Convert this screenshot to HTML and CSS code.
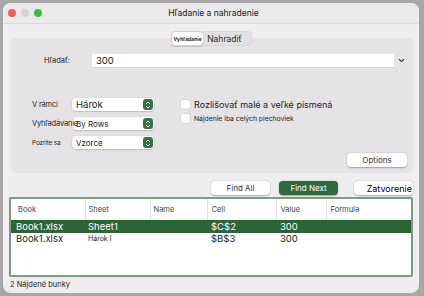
FILE: index.html
```html
<!DOCTYPE html>
<html lang="sk">
<head>
<meta charset="UTF-8">
<meta name="viewport" content="width=device-width, initial-scale=1.0">
<title>Hľadanie a nahradenie</title>
<link rel="stylesheet" href="styles.css">
</head>
<body>

<div class="window">
    <div class="titlebar">
        <div class="lights">
            <span class="light red"></span>
            <span class="light gray"></span>
            <span class="light green"></span>
        </div>
        <div class="title">Hľadanie a nahradenie</div>
    </div>

    <div class="content">
        <div class="tabs">
            <span class="tab active">Vyhľadanie</span>
            <span class="tab">Nahradiť</span>
        </div>

        <div class="group">
            <div class="find-row">
                <label class="find-label">Hľadať:</label>
                <div class="field">300</div>
                <span class="chevron">
                    <svg width="7" height="5" viewBox="0 0 7 5"><path d="M1 1.2 L3.5 3.6 L6 1.2" fill="none" stroke="#333" stroke-width="1.1"/></svg>
                </span>
            </div>

            <div class="options-area">
                <div class="popups">
                    <div class="popup-row">
                        <span class="plabel">V rámci</span>
                        <div class="popup big">Hárok<span class="stepper"><svg width="6" height="8" viewBox="0 0 6 8"><path d="M1 3 L3 1 L5 3 M1 5 L3 7 L5 5" fill="none" stroke="#fff" stroke-width="1"/></svg></span></div>
                    </div>
                    <div class="popup-row">
                        <span class="plabel">Vyhľadávanie</span>
                        <div class="popup">By Rows<span class="stepper"><svg width="6" height="8" viewBox="0 0 6 8"><path d="M1 3 L3 1 L5 3 M1 5 L3 7 L5 5" fill="none" stroke="#fff" stroke-width="1"/></svg></span></div>
                    </div>
                    <div class="popup-row">
                        <span class="plabel small">Pozrite sa</span>
                        <div class="popup">Vzorce<span class="stepper"><svg width="6" height="8" viewBox="0 0 6 8"><path d="M1 3 L3 1 L5 3 M1 5 L3 7 L5 5" fill="none" stroke="#fff" stroke-width="1"/></svg></span></div>
                    </div>
                </div>
                <div class="checks">
                    <div class="check-row"><span class="box"></span><span class="big-text">Rozlišovať malé a veľké písmená</span></div>
                    <div class="check-row"><span class="box"></span><span class="small-text">Nájdenie iba celých plechoviek</span></div>
                </div>
            </div>

            <div class="options-row">
                <button class="btn">Options</button>
            </div>
        </div>

        <div class="buttons">
            <button class="btn wide">Find All</button>
            <button class="btn wide primary">Find Next</button>
            <button class="btn wide close">Zatvorenie</button>
        </div>

        <div class="results">
            <table>
                <tr class="head">
                    <th class="c-book">Book</th>
                    <th class="c-sheet">Sheet</th>
                    <th class="c-name">Name</th>
                    <th class="c-cell">Cell</th>
                    <th class="c-value">Value</th>
                    <th class="c-formula">Formula</th>
                </tr>
                <tr class="selected">
                    <td class="first">Book1.xlsx</td>
                    <td>Sheet1</td>
                    <td></td>
                    <td>$C$2</td>
                    <td>300</td>
                    <td></td>
                </tr>
                <tr>
                    <td class="first">Book1.xlsx</td>
                    <td class="tiny">Hárok I</td>
                    <td></td>
                    <td>$B$3</td>
                    <td>300</td>
                    <td></td>
                </tr>
            </table>
        </div>

        <div class="status">2 Nájdené bunky</div>
    </div>
</div>

</body>
</html>
```

FILE: styles.css
```css
body {
    margin: 0;
    background-color: #a7a7a7;
    font-family: Inter, "Liberation Sans", sans-serif;
    color: #1e1e1e;
}

.window {
    width: 416px;
    height: 290px;
    margin: 3px 0 0 3px;
    background-color: #efedef;
    border-radius: 8px;
    overflow: hidden;
}

/* Title bar */
.titlebar {
    height: 20px;
    display: flex;
    align-items: center;
    border-bottom: 1px solid #dcdadc;
    background-color: #ebe9eb;
}

.lights {
    display: flex;
    gap: 5px;
    padding-left: 5px;
    width: 60px;
}

.light {
    width: 8px;
    height: 8px;
    border-radius: 50%;
}

.light.red { background-color: #ec5f56; }
.light.gray { background-color: #d6d4d6; }
.light.green { background-color: #3fbe3d; }

.title {
    flex: 1;
    text-align: center;
    font-size: 8.5px;
    margin-right: 60px;
    color: #222;
}

.content {
    padding: 7px 5px 0 6px;
}

/* Tabs */
.tabs {
    display: flex;
    justify-content: center;
    position: relative;
    z-index: 1;
}

.tab {
    box-sizing: border-box;
    width: 49px;
    height: 15px;
    display: flex;
    align-items: center;
    justify-content: center;
    font-size: 8.5px;
    color: #2b2b2b;
    background-color: #e2e0e2;
    border: 1px solid #d8d6d8;
    padding: 0 6px 0 0;
    border-radius: 0 4px 4px 0;
}

.tab.active {
    width: 33px;
    background-color: #fff;
    font-size: 5px;
    font-weight: bold;
    padding: 0 1px;
    border-radius: 4px;
    border-color: #d0ced0;
    box-shadow: 0 1px 1px rgba(0, 0, 0, 0.15);
    margin-right: -1px;
}

/* Group box */
.group {
    margin: -8px 0 0 2px;
    width: 402px;
    height: 135px;
    background-color: #e5e3e5;
    border-radius: 5px;
    box-sizing: border-box;
    padding-top: 16px;
}

.find-row {
    display: flex;
    align-items: center;
    height: 13px;
}

.find-label {
    width: 59px;
    text-align: right;
    font-size: 7.5px;
    padding-right: 22px;
}

.field {
    width: 298px;
    height: 13px;
    background-color: #fff;
    font-size: 9.5px;
    line-height: 13px;
    padding-left: 4px;
    box-shadow: 0 1px 0 #d6d4d6;
}

.chevron {
    margin-left: 4px;
    display: flex;
}

.options-area {
    display: flex;
    margin-top: 31px;
}

.popups {
    display: flex;
    flex-direction: column;
    gap: 6px;
    width: 170px;
}

.popup-row {
    display: flex;
    align-items: center;
    height: 13px;
}

.plabel {
    width: 40px;
    padding-left: 21px;
    font-size: 7.5px;
    white-space: nowrap;
    letter-spacing: -0.2px;
    position: relative;
    z-index: 1;
}

.plabel.small {
    font-size: 6.5px;
}

.popup {
    width: 78px;
    height: 13px;
    background-color: #fff;
    border-radius: 4px;
    box-shadow: 0 0.5px 1.5px rgba(0, 0, 0, 0.3);
    display: flex;
    align-items: center;
    justify-content: space-between;
    padding-left: 4px;
    font-size: 8px;
}

.popup.big {
    font-size: 9.5px;
}

.stepper {
    width: 10px;
    height: 11px;
    margin-right: 1px;
    border-radius: 3px;
    background-color: #357249;
    display: flex;
    align-items: center;
    justify-content: center;
}

.checks {
    display: flex;
    flex-direction: column;
    gap: 4px;
    padding-top: 1px;
}

.check-row {
    display: flex;
    align-items: center;
    gap: 4px;
    height: 10px;
}

.box {
    width: 9px;
    height: 9px;
    background-color: #fff;
    border-radius: 2px;
    box-shadow: 0 0 0 0.5px #c8c6c8;
}

.big-text {
    font-size: 9px;
}

.small-text {
    font-size: 6.8px;
}

.options-row {
    display: flex;
    justify-content: flex-end;
    padding-right: 6px;
    margin-top: 4px;
}

/* Buttons */
.btn {
    font-family: Inter, "Liberation Sans", sans-serif;
    height: 14px;
    width: 60px;
    font-size: 8px;
    color: #333;
    background-color: #fff;
    border: none;
    border-radius: 4px;
    box-shadow: 0 0.5px 1.5px rgba(0, 0, 0, 0.3);
    padding: 0;
}

.buttons {
    display: flex;
    justify-content: flex-end;
    gap: 9px;
    margin-top: 8px;
    padding-right: 1px;
}

.btn.wide {
    width: 59px;
}

.btn.primary {
    background-color: #2f6a3e;
    color: #fff;
    margin-right: 7px;
}

.btn.close {
    font-size: 9px;
    color: #000;
    text-align: right;
    padding-right: 1px;
}

/* Results table */
.results {
    margin: 2px 1px 0 0;
    height: 80px;
    box-sizing: border-box;
    border: 2px solid #7d9c82;
    border-radius: 2px;
    background-color: #fff;
}

table {
    width: 100%;
    table-layout: fixed;
    border-collapse: collapse;
    font-size: 9.5px;
}

th {
    box-sizing: border-box;
    font-weight: normal;
    font-size: 7.5px;
    color: #444;
    text-align: left;
    height: 21px;
    padding: 0 0 0 3px;
    border-left: 1px solid #e2e2e2;
}

th.c-book {
    border-left: none;
    width: 74px;
    padding-left: 7px;
}

th.c-sheet { width: 65px; }
th.c-name { width: 57px; }
th.c-cell { width: 69px; padding-left: 4px; }
th.c-value { width: 50px; padding-left: 4px; }
th.c-formula { padding-left: 4px; }

td {
    height: 12.5px;
    padding: 0 0 0 4px;
    white-space: nowrap;
}

td.first {
    padding-left: 5px;
}

td:nth-child(2) { padding-left: 3px; }

tr.selected td {
    background-color: #2b6535;
    color: #fff;
}

td.tiny {
    font-size: 7px;
}

.status {
    font-size: 7.5px;
    padding: 3px 0 0 1px;
}
```
